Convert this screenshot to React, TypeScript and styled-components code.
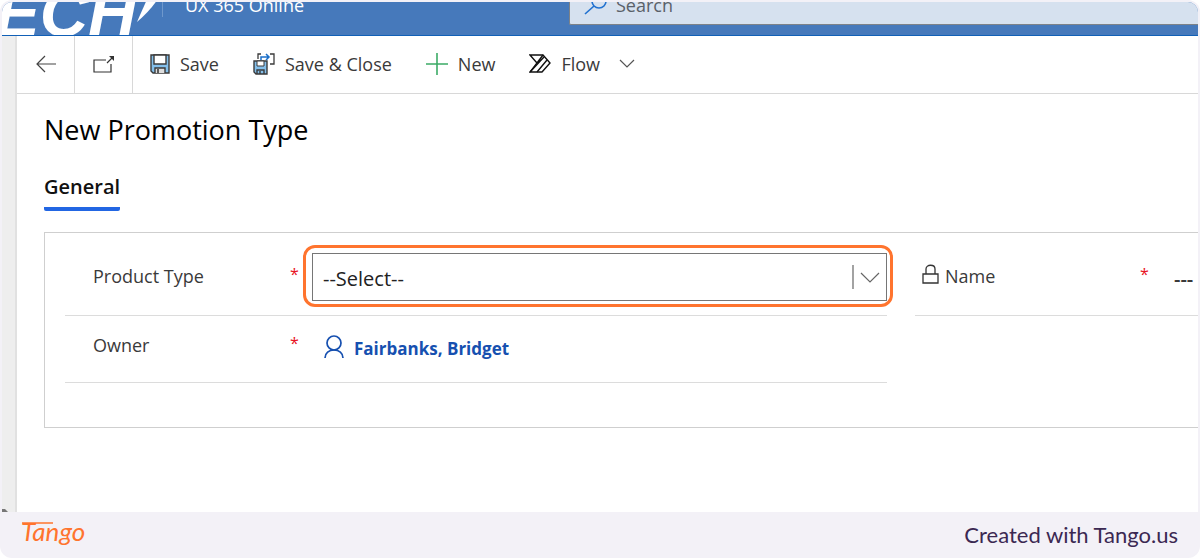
import React from "react";
import styled, { createGlobalStyle } from "styled-components";

const GlobalStyle = createGlobalStyle`
  * { box-sizing: border-box; }
  body { margin: 0; background: #ffffff; }
  button, input, select { font: inherit; color: inherit; }
`;

const sans = `"Open Sans", "Noto Sans", sans-serif`;

const Card = styled.div`
  display: flex;
  flex-direction: column;
  min-height: 100vh;
  padding: 2px 2px 0;
  overflow: hidden;
  border-radius: 12px;
  background: #f3f1f7;
  font-family: ${sans};
  color: #3a3a3a;
`;

const Shot = styled.div`
  display: flex;
  flex: 1;
  flex-direction: column;
  overflow: hidden;
  border-radius: 10px 10px 0 0;
  background: #ffffff;
`;

const Header = styled.header`
  overflow: hidden;
  border-bottom: 1px solid #1160b7;
  background: #4679bb;
`;

/* The header is scrolled partly out of view. */
const HeaderRow = styled.div`
  display: flex;
  align-items: center;
  height: 60px;
  margin-top: -27px;
  color: #ffffff;
`;

const Brand = styled.svg`
  flex: none;
  width: 160px;
  height: 60px;
`;

const AppName = styled.div`
  flex: none;
  width: 407px;
  padding-left: 22px;
  border-left: 1px solid #6f98cc;
  font-size: 18px;
  line-height: 24px;
  font-weight: 500;
`;

const SearchBox = styled.label`
  display: flex;
  flex: 1;
  align-items: center;
  gap: 8px;
  height: 40px;
  padding-left: 14px;
  border: 1px solid #7d8288;
  border-right: 0;
  border-radius: 2px 0 0 2px;
  background: #d6e1ef;
`;

const SearchInput = styled.input`
  flex: 1;
  min-width: 0;
  padding: 0;
  border: 0;
  background: transparent;
  font-size: 18px;
  line-height: 24px;
  &::placeholder { color: #5a6068; opacity: 1; }
`;

const Body = styled.div`
  display: flex;
  flex: 1;
`;

const Rail = styled.aside`
  display: flex;
  flex: none;
  align-items: flex-end;
  width: 15px;
  border-right: 2px solid #e1e1e1;
  background: #eeeeee;
`;

const Main = styled.main`
  flex: 1;
  min-width: 0;
`;

const Toolbar = styled.div`
  display: flex;
  height: 58px;
  border-bottom: 1px solid #d8d8d8;
`;

const IconButton = styled.button`
  display: grid;
  place-items: center;
  width: 58px;
  padding: 0 0 2px;
  border: 0;
  border-right: 1px solid #d8d8d8;
  background: transparent;
`;

const ToolButton = styled.button`
  display: flex;
  align-items: center;
  gap: 10px;
  padding: 0 17px 2px;
  border: 0;
  background: transparent;
  font-size: 18px;
  line-height: 24px;
`;

const MoreMark = styled.svg`
  flex: none;
  width: 16px;
  height: 10px;
  margin-left: 9px;
`;

const Content = styled.div`
  padding: 19px 0 0 27px;
`;

const Title = styled.h1`
  margin: 0;
  font-size: 27px;
  line-height: 34px;
  font-weight: 500;
  color: #000000;
`;

const Tab = styled.button`
  display: block;
  margin: 24px 0 21px;
  padding: 3px 0 11px;
  border: 0;
  border-radius: 2px;
  background: linear-gradient(#2266e3, #2266e3) bottom / 100% 4px no-repeat;
  font-size: 20px;
  line-height: 26px;
  font-weight: 600;
  color: #111111;
`;

const Section = styled.section`
  display: flex;
  gap: 28px;
  padding: 0 0 44px 20px;
  border: 1px solid #cfcfcf;
  border-right: 0;
`;

const Column = styled.div<{ $grow: number }>`
  flex: ${(p) => p.$grow} 1 0;
  min-width: 0;
`;

const Field = styled.div<{ $tall?: boolean }>`
  display: flex;
  align-items: center;
  height: ${(p) => (p.$tall ? 83 : 67)}px;
  padding: ${(p) => (p.$tall ? "4px 0 0" : "0 0 8px")};
  border-bottom: 1px solid #dcdcdc;
`;

const FieldLabel = styled.label<{ $inset: number }>`
  display: flex;
  flex: none;
  align-items: center;
  gap: 6px;
  width: 225px;
  padding-left: ${(p) => p.$inset}px;
  font-size: 18px;
  line-height: 24px;
`;

const Star = styled.span`
  flex: none;
  width: 22px;
  padding-bottom: 4px;
  font-size: 16px;
  line-height: 22px;
  color: #e81123;
`;

const Highlight = styled.div`
  flex: 1;
  min-width: 0;
  margin: 0 -6px 0 -9px;
  padding: 5px 3px 3px 6px;
  border: 3px solid #ff742e;
  border-radius: 12px;
`;

const SelectFrame = styled.div`
  display: flex;
  align-items: center;
  height: 48px;
  padding-right: 6px;
  border: 1px solid #767676;
`;

const Select = styled.select`
  flex: 1;
  min-width: 0;
  padding: 4px 10px 0;
  border: 0;
  appearance: none;
  background: transparent;
  font-size: 20px;
  line-height: 26px;
  color: #222222;
`;

const Owner = styled.a`
  display: flex;
  align-items: center;
  gap: 10px;
  padding: 4px 0 0 12px;
  font-size: 17px;
  line-height: 24px;
  font-weight: 700;
  color: #1650b0;
  text-decoration: none;
`;

const OwnerName = styled.span`
  padding-top: 3px;
`;

const NameInput = styled.input`
  flex: 1;
  min-width: 0;
  padding: 4px 0 0 12px;
  border: 0;
  background: transparent;
  font-size: 20px;
  font-weight: 600;
`;

const Footer = styled.footer`
  display: flex;
  align-items: center;
  justify-content: space-between;
  height: 46px;
  padding: 0 20px 0 16px;
`;

const Credit = styled.a`
  font-family: Lato, sans-serif;
  font-size: 22px;
  line-height: 26px;
  color: #3b2852;
  text-decoration: none;
`;

const SaveIcon = () => (
  <svg width="20" height="20" viewBox="0 0 20 20">
    <path d="M1 1h18v18H3l-2-2z" fill="#84bfea" stroke="#3a3a3a" strokeWidth="1.4" />
    <path d="M4 1h12v9H4z" fill="#fff" stroke="#3a3a3a" strokeWidth="1.4" />
    <path d="M5 19v-5h10v5" fill="#ddd" stroke="#3a3a3a" strokeWidth="1.4" />
    <path d="M8 15v4" stroke="#3a3a3a" strokeWidth="1.6" />
  </svg>
);

export default function App() {
  return (
    <Card>
      <GlobalStyle />
      <Shot>
        <Header>
          <HeaderRow>
            <Brand viewBox="0 0 160 60" role="img" aria-label="ECH">
              <text x="-7" y="61" fill="#fff" fontFamily="Liberation Sans, sans-serif" fontSize="67" fontWeight="700" fontStyle="italic">ECH</text>
              <path d="M157 22 146 22 135 47Q150 34 157 22z" fill="#fff" />
            </Brand>
            <AppName>UX 365 Online</AppName>
            <SearchBox>
              <svg width="24" height="24" viewBox="0 0 24 24" fill="none" stroke="#2272d0" strokeWidth="1.6">
                <circle cx="15" cy="8" r="7" />
                <path d="M10 13 1 21" />
              </svg>
              <SearchInput type="search" placeholder="Search" />
            </SearchBox>
          </HeaderRow>
        </Header>
        <Body>
          <Rail>
            <svg width="6" height="3" viewBox="0 0 6 3">
              <path d="M0 0h3l3 3H0z" fill="#777" />
            </svg>
          </Rail>
          <Main>
            <Toolbar>
              <IconButton aria-label="Back">
                <svg width="20" height="18" viewBox="0 0 20 18" fill="none" stroke="#444" strokeWidth="1.2">
                  <path d="M9 1 1 9l8 8M1 9h19" />
                </svg>
              </IconButton>
              <IconButton aria-label="Open in new window">
                <svg width="22" height="18" viewBox="0 0 22 18" fill="none" stroke="#333" strokeWidth="1.2">
                  <path d="M13 5H1v12h17V9M14 8l6-6" />
                  <path d="M16 1h5v5z" fill="#333" stroke="none" />
                </svg>
              </IconButton>
              <ToolButton>
                <SaveIcon />
                Save
              </ToolButton>
              <ToolButton>
                <svg width="22" height="22" viewBox="0 0 22 22" fill="none">
                  <path d="M1 8h13v13H3l-2-2z" fill="#84bfea" stroke="#3a3a3a" strokeWidth="1.4" />
                  <path d="M4 8h7v5H4z" fill="#fff" stroke="#3a3a3a" />
                  <path d="M4 21v-4h7v4M7 18v3" stroke="#3a3a3a" strokeWidth="1.4" />
                  <path d="M8 1H5v5M17 1h4v10h-4" stroke="#3a3a3a" strokeWidth="1.3" />
                  <path d="M8 7V4h8M13 1l3 3-3 3" stroke="#1b6fc9" strokeWidth="1.5" />
                </svg>
                Save &amp; Close
              </ToolButton>
              <ToolButton>
                <svg width="22" height="22" viewBox="0 0 22 22" stroke="#3bab66" strokeWidth="1.6">
                  <path d="M11 0v22M0 11h22" />
                </svg>
                New
              </ToolButton>
              <ToolButton>
                <svg width="22" height="20" viewBox="0 0 22 20" fill="none" stroke="#111" strokeWidth="1.4">
                  <path d="M1 1h13l7 8-8 9H1l7-9z" />
                  <path d="M8 9 14 1M1 18 15 3M8 18 18 6" />
                </svg>
                Flow
                <MoreMark viewBox="0 0 16 10" fill="none" stroke="#555" strokeWidth="1.2">
                  <path d="m1 1 7 7 7-7" />
                </MoreMark>
              </ToolButton>
            </Toolbar>
            <Content>
              <Title>New Promotion Type</Title>
              <Tab role="tab" aria-selected="true">General</Tab>
              <Section>
                <Column $grow={822}>
                  <Field $tall>
                    <FieldLabel htmlFor="product-type" $inset={28}>Product Type</FieldLabel>
                    <Star>*</Star>
                    <Highlight>
                      <SelectFrame>
                        <Select id="product-type"><option>--Select--</option></Select>
                        <svg width="28" height="26" viewBox="0 0 28 26" fill="none" stroke="#666" strokeWidth="1.2">
                          <path d="M1 1v24M9 9l9 9 9-9" />
                        </svg>
                      </SelectFrame>
                    </Highlight>
                  </Field>
                  <Field>
                    <FieldLabel as="div" $inset={28}>Owner</FieldLabel>
                    <Star>*</Star>
                    <Owner href="#owner">
                      <svg width="20" height="24" viewBox="0 0 20 24" fill="none" stroke="#1650b0" strokeWidth="1.7">
                        <circle cx="10" cy="8" r="7" />
                        <path d="M1 23c0-5 4-8 9-8s9 3 9 8" />
                      </svg>
                      <OwnerName>Fairbanks, Bridget</OwnerName>
                    </Owner>
                  </Field>
                </Column>
                <Column $grow={283}>
                  <Field $tall>
                    <FieldLabel htmlFor="name" $inset={7}>
                      <svg width="17" height="24" viewBox="0 0 17 24" fill="none" stroke="#333" strokeWidth="1.3">
                        <path d="M1 10h15v9H1zM4 10V5c0-5 9-5 9 0v5" />
                      </svg>
                      Name
                    </FieldLabel>
                    <Star>*</Star>
                    <NameInput id="name" defaultValue="---" readOnly />
                  </Field>
                </Column>
              </Section>
            </Content>
          </Main>
        </Body>
      </Shot>
      <Footer>
        <svg width="84" height="44" viewBox="0 0 84 44" role="img" aria-label="Tango">
          <path d="M4 10h31" stroke="#ff742e" strokeWidth="1.6" />
          <text x="3" y="28" fill="#ff742e" fontFamily="Lato, cursive" fontSize="26" fontStyle="italic">Tango</text>
        </svg>
        <Credit href="#tango">Created with Tango.us</Credit>
      </Footer>
    </Card>
  );
}
